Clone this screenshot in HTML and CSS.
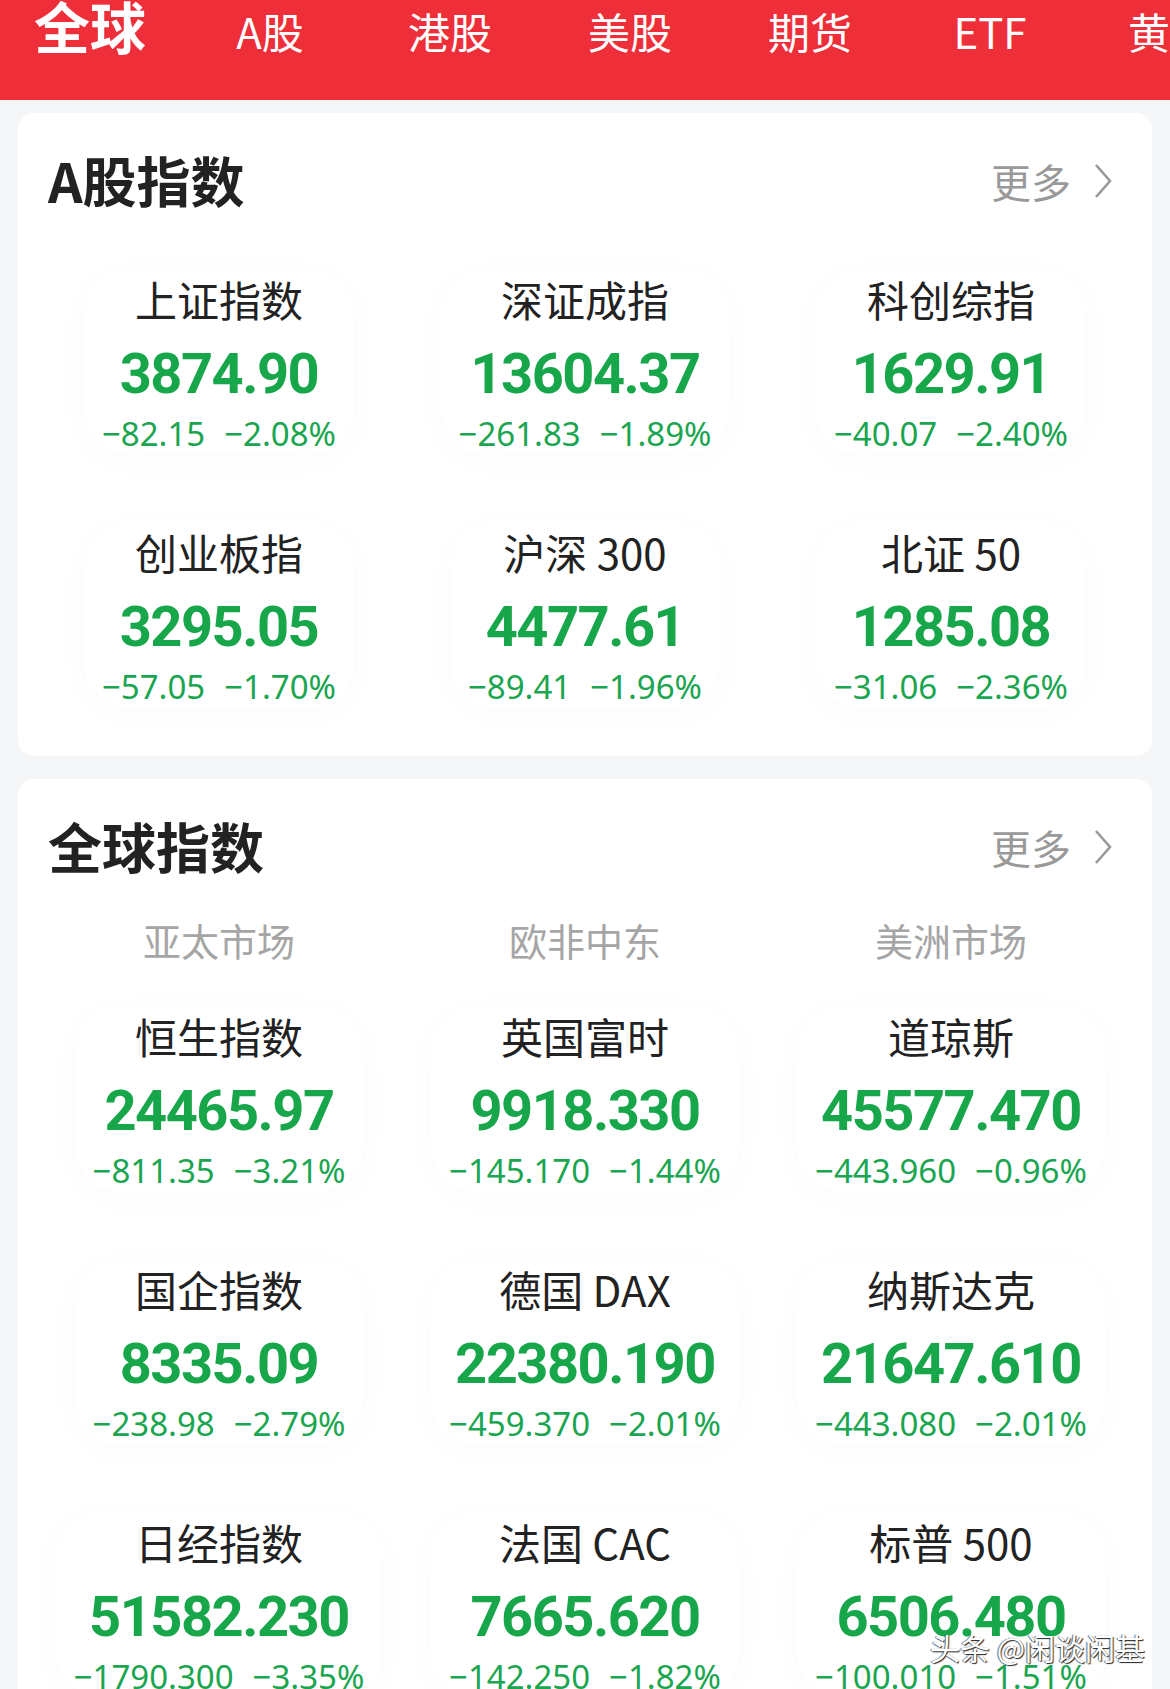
FILE: index.html
```html
<!DOCTYPE html>
<html lang="zh-cn">
<head>
    <meta charset="UTF-8">
    <title>行情</title>
    <link rel="stylesheet" href="styles.css">
</head>
<body>
    <div class="page">
        <nav class="tabs">
            <a href="javascript:;" class="tab tab-active">全球</a>
            <a href="javascript:;" class="tab">A股</a>
            <a href="javascript:;" class="tab">港股</a>
            <a href="javascript:;" class="tab">美股</a>
            <a href="javascript:;" class="tab">期货</a>
            <a href="javascript:;" class="tab">ETF</a>
            <a href="javascript:;" class="tab">黄金</a>
        </nav>

        <section class="card">
            <div class="card-head">
                <h2 class="card-title">A股指数</h2>
                <a href="javascript:;" class="more">更多<svg viewBox="0 0 20 38"><polyline points="3,3 17,19 3,35"/></svg></a>
            </div>
            <div class="grid">
                <div class="cell"><div class="bubble">
                    <p class="name">上证指数</p>
                    <p class="value">3874.90</p>
                    <p class="change"><span>−82.15</span><span>−2.08%</span></p>
                </div></div>
                <div class="cell"><div class="bubble">
                    <p class="name">深证成指</p>
                    <p class="value">13604.37</p>
                    <p class="change"><span>−261.83</span><span>−1.89%</span></p>
                </div></div>
                <div class="cell"><div class="bubble">
                    <p class="name">科创综指</p>
                    <p class="value">1629.91</p>
                    <p class="change"><span>−40.07</span><span>−2.40%</span></p>
                </div></div>
                <div class="cell"><div class="bubble">
                    <p class="name">创业板指</p>
                    <p class="value">3295.05</p>
                    <p class="change"><span>−57.05</span><span>−1.70%</span></p>
                </div></div>
                <div class="cell"><div class="bubble">
                    <p class="name">沪深 300</p>
                    <p class="value">4477.61</p>
                    <p class="change"><span>−89.41</span><span>−1.96%</span></p>
                </div></div>
                <div class="cell"><div class="bubble">
                    <p class="name">北证 50</p>
                    <p class="value">1285.08</p>
                    <p class="change"><span>−31.06</span><span>−2.36%</span></p>
                </div></div>
            </div>
        </section>

        <section class="card card-global">
            <div class="card-head">
                <h2 class="card-title">全球指数</h2>
                <a href="javascript:;" class="more">更多<svg viewBox="0 0 20 38"><polyline points="3,3 17,19 3,35"/></svg></a>
            </div>
            <div class="regions">
                <span>亚太市场</span>
                <span>欧非中东</span>
                <span>美洲市场</span>
            </div>
            <div class="grid grid-global">
                <div class="cell"><div class="bubble">
                    <p class="name">恒生指数</p>
                    <p class="value">24465.97</p>
                    <p class="change"><span>−811.35</span><span>−3.21%</span></p>
                </div></div>
                <div class="cell"><div class="bubble">
                    <p class="name">英国富时</p>
                    <p class="value">9918.330</p>
                    <p class="change"><span>−145.170</span><span>−1.44%</span></p>
                </div></div>
                <div class="cell"><div class="bubble">
                    <p class="name">道琼斯</p>
                    <p class="value">45577.470</p>
                    <p class="change"><span>−443.960</span><span>−0.96%</span></p>
                </div></div>
                <div class="cell"><div class="bubble">
                    <p class="name">国企指数</p>
                    <p class="value">8335.09</p>
                    <p class="change"><span>−238.98</span><span>−2.79%</span></p>
                </div></div>
                <div class="cell"><div class="bubble">
                    <p class="name">德国 DAX</p>
                    <p class="value">22380.190</p>
                    <p class="change"><span>−459.370</span><span>−2.01%</span></p>
                </div></div>
                <div class="cell"><div class="bubble">
                    <p class="name">纳斯达克</p>
                    <p class="value">21647.610</p>
                    <p class="change"><span>−443.080</span><span>−2.01%</span></p>
                </div></div>
                <div class="cell"><div class="bubble">
                    <p class="name">日经指数</p>
                    <p class="value">51582.230</p>
                    <p class="change"><span>−1790.300</span><span>−3.35%</span></p>
                </div></div>
                <div class="cell"><div class="bubble">
                    <p class="name">法国 CAC</p>
                    <p class="value">7665.620</p>
                    <p class="change"><span>−142.250</span><span>−1.82%</span></p>
                </div></div>
                <div class="cell"><div class="bubble">
                    <p class="name">标普 500</p>
                    <p class="value">6506.480</p>
                    <p class="change"><span>−100.010</span><span>−1.51%</span></p>
                </div></div>
            </div>
        </section>

        <div class="watermark">头条 @闲谈闲基</div>
    </div>
</body>
</html>
```

FILE: styles.css
```css
* {
    margin: 0;
    padding: 0;
    box-sizing: border-box;
}
body {
    font-family: "Noto Sans CJK SC", sans-serif;
    background: #f5f6f7;
}
a {
    text-decoration: none;
}
.page {
    width: 1170px;
    height: 1689px;
    overflow: hidden;
    position: relative;
}

/* 顶部频道 */
.tabs {
    display: flex;
    align-items: baseline;
    height: 100px;
    background: #ee2e38;
    overflow: hidden;
}
.tab {
    flex: 0 0 180px;
    text-align: center;
    color: #fff;
    font-size: 42px;
    line-height: 1.05;
    white-space: nowrap;
}
.tab-active {
    font-size: 56px;
    font-weight: 700;
    line-height: 0.9;
}

/* 卡片 */
.card {
    margin: 13px 18px 0;
    background: #fff;
    border-radius: 16px;
    padding: 36px 18px 49px;
}
.card-global {
    margin-top: 23px;
}
.card-head {
    display: flex;
    justify-content: space-between;
    align-items: center;
    height: 64px;
    padding: 0 21px 0 12px;
}
.card-title {
    font-size: 54px;
    font-weight: 700;
    line-height: 64px;
    color: #222;
    margin-top: -3px;
}
.more {
    display: flex;
    align-items: center;
    gap: 22px;
    font-size: 40px;
    color: #999;
}
.more svg {
    width: 20px;
    height: 38px;
    fill: none;
    stroke: #999;
    stroke-width: 2.6;
}

.regions {
    display: grid;
    grid-template-columns: repeat(3, 1fr);
    margin-top: 33px;
    text-align: center;
    font-size: 38px;
    line-height: 56px;
    color: #a5a5a5;
}

.grid {
    display: grid;
    grid-template-columns: repeat(3, 1fr);
    row-gap: 69px;
    margin-top: 57px;
}
.grid-global {
    margin-top: 39px;
}
.cell {
    text-align: center;
}
.bubble {
    display: inline-block;
    padding: 0 18px;
    border-radius: 44px;
    box-shadow: 0 6px 40px rgba(0, 0, 0, 0.02);
}
.name {
    font-size: 42px;
    font-weight: 400;
    line-height: 64px;
    color: #222;
    margin: -3px 0 3px;
}
.value {
    font-family: Roboto, "Noto Sans", sans-serif;
    font-size: 56px;
    font-weight: 700;
    line-height: 80px;
    letter-spacing: -1.5px;
    color: #18a64b;
    white-space: nowrap;
}
.change {
    display: flex;
    justify-content: center;
    gap: 19px;
    font-family: "Noto Sans", Roboto, sans-serif;
    font-size: 33px;
    line-height: 40px;
    color: #1aa550;
    white-space: nowrap;
}

/* 水印 */
.watermark {
    position: absolute;
    left: 930px;
    top: 1632px;
    font-size: 30px;
    line-height: 1;
    color: #fff;
    white-space: nowrap;
    text-shadow: 1px 1px 1px rgba(0, 0, 0, 0.85), -1px 0 1px rgba(0, 0, 0, 0.6);
}
```
